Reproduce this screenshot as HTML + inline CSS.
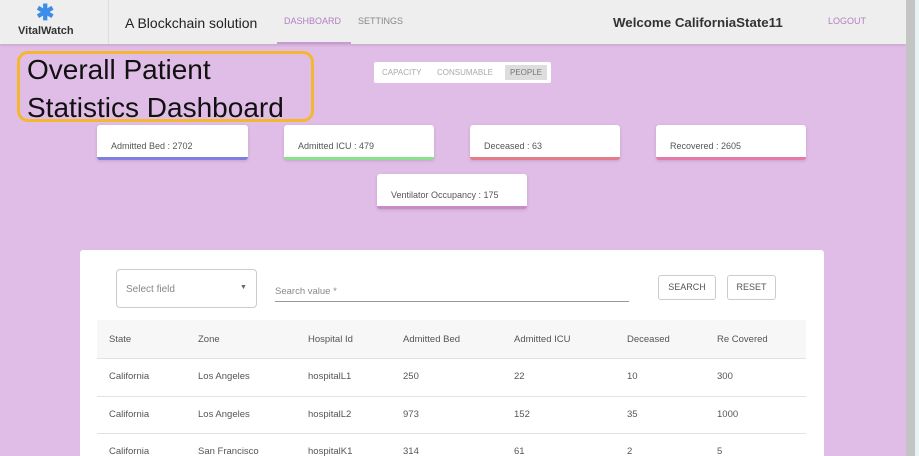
<!DOCTYPE html>
<html><head><meta charset="utf-8"><style>
*{box-sizing:border-box;margin:0;padding:0}
html,body{width:919px;height:456px;overflow:hidden}
body{background:#e0bde6;font-family:"Liberation Sans",sans-serif;position:relative;color:#444}
.abs{position:absolute}
#hdr{left:0;top:0;width:906px;height:44px;background:#eeeeee;box-shadow:0 1px 3px rgba(0,0,0,.15)}
.card{position:absolute;background:#fff;height:35px;border-radius:3px;font-size:9px;color:#555;padding:16px 0 0 14px;box-shadow:0 1px 3px rgba(0,0,0,.15)}
.th,.td{position:absolute;font-size:9.5px;color:#555}
.line{position:absolute;left:97px;width:709px;height:1px;background:#e2e2e2}
</style></head><body>
<div id="hdr" class="abs">
  <div class="abs" style="left:36px;top:3px;color:#3a8de8;font-size:22px;font-weight:bold;line-height:20px">✱</div>
  <div class="abs" style="left:18px;top:25px;font-size:11px;font-weight:bold;color:#333">VitalWatch</div>
  <div class="abs" style="left:108px;top:0;width:1px;height:44px;background:#ddd"></div>
  <div class="abs" style="left:125px;top:15px;font-size:14px;color:#222">A Blockchain solution</div>
  <div class="abs" style="left:284px;top:16px;font-size:9px;color:#b27fc0">DASHBOARD</div>
  <div class="abs" style="left:277px;top:42px;width:74px;height:2px;background:#c79ad2"></div>
  <div class="abs" style="left:358px;top:16px;font-size:9px;color:#888">SETTINGS</div>
  <div class="abs" style="left:613px;top:15px;font-size:13.3px;font-weight:bold;color:#333">Welcome CaliforniaState11</div>
  <div class="abs" style="left:828px;top:16px;font-size:9px;color:#b27fc0">LOGOUT</div>
</div>
<div class="abs" style="left:906px;top:0;width:9px;height:456px;background:#c4c4c4"></div>
<div class="abs" style="left:915px;top:0;width:4px;height:456px;background:#e4f4f4"></div>

<div class="abs" style="left:17px;top:51px;width:297px;height:71px;border:3px solid #f5b731;border-radius:11px"></div>
<div class="abs" style="left:27px;top:51px;font-size:28px;line-height:38px;color:#111">Overall Patient<br>Statistics Dashboard</div>

<div class="abs" style="left:374px;top:62px;width:177px;height:21px;background:#fff;border-radius:2px;font-size:8px;color:#aaa">
  <span class="abs" style="left:8px;top:6px">CAPACITY</span>
  <span class="abs" style="left:63px;top:6px">CONSUMABLE</span>
  <span class="abs" style="left:131px;top:3px;width:42px;height:15px;background:#ddd;color:#777;padding:3px 0 0 5px">PEOPLE</span>
</div>

<div class="card" style="left:97px;top:125px;width:151px;border-bottom:3px solid #7f7fe0">Admitted Bed : 2702</div>
<div class="card" style="left:284px;top:125px;width:150px;border-bottom:3px solid #8ce08c">Admitted ICU : 479</div>
<div class="card" style="left:470px;top:125px;width:150px;border-bottom:3px solid #e37b88">Deceased : 63</div>
<div class="card" style="left:656px;top:125px;width:150px;border-bottom:3px solid #e37ba8">Recovered : 2605</div>
<div class="card" style="left:377px;top:174px;width:150px;border-bottom:3px solid #c88bc8">Ventilator Occupancy : 175</div>

<div class="abs" style="left:80px;top:250px;width:744px;height:206px;background:#fff;border-radius:3px 3px 0 0"></div>
<div class="abs" style="left:116px;top:269px;width:141px;height:39px;border:1px solid #ccc;border-radius:4px;font-size:10px;color:#888;padding:14px 0 0 9px">Select field<span class="abs" style="left:123px;top:14px;font-size:7px;color:#666">▼</span></div>
<div class="abs" style="left:275px;top:286px;font-size:9.5px;color:#888">Search value *</div>
<div class="abs" style="left:275px;top:301px;width:354px;height:1px;background:#999"></div>
<div class="abs" style="left:658px;top:275px;width:58px;height:25px;border:1px solid #ccc;border-radius:3px;font-size:9px;color:#555;text-align:center;line-height:23px">SEARCH</div>
<div class="abs" style="left:727px;top:275px;width:49px;height:25px;border:1px solid #ccc;border-radius:3px;font-size:9px;color:#555;text-align:center;line-height:23px">RESET</div>

<div class="abs" style="left:97px;top:320px;width:709px;height:38px;background:#f7f7f7"></div>
<div class="line" style="top:358px"></div>
<div class="line" style="top:396px"></div>
<div class="line" style="top:433px"></div>

<div class="th" style="left:109px;top:334px">State</div>
<div class="th" style="left:198px;top:334px">Zone</div>
<div class="th" style="left:308px;top:334px">Hospital Id</div>
<div class="th" style="left:403px;top:334px">Admitted Bed</div>
<div class="th" style="left:514px;top:334px">Admitted ICU</div>
<div class="th" style="left:627px;top:334px">Deceased</div>
<div class="th" style="left:717px;top:334px">Re Covered</div>

<div class="td" style="left:109px;top:371px">California</div><div class="td" style="left:198px;top:371px">Los Angeles</div><div class="td" style="left:308px;top:371px">hospitalL1</div><div class="td" style="left:403px;top:371px">250</div><div class="td" style="left:514px;top:371px">22</div><div class="td" style="left:627px;top:371px">10</div><div class="td" style="left:717px;top:371px">300</div>
<div class="td" style="left:109px;top:409px">California</div><div class="td" style="left:198px;top:409px">Los Angeles</div><div class="td" style="left:308px;top:409px">hospitalL2</div><div class="td" style="left:403px;top:409px">973</div><div class="td" style="left:514px;top:409px">152</div><div class="td" style="left:627px;top:409px">35</div><div class="td" style="left:717px;top:409px">1000</div>
<div class="td" style="left:109px;top:446px">California</div><div class="td" style="left:198px;top:446px">San Francisco</div><div class="td" style="left:308px;top:446px">hospitalK1</div><div class="td" style="left:403px;top:446px">314</div><div class="td" style="left:514px;top:446px">61</div><div class="td" style="left:627px;top:446px">2</div><div class="td" style="left:717px;top:446px">5</div>
</body></html>
